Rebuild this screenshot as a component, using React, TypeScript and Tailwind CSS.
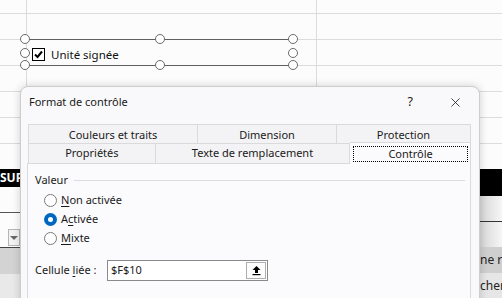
import { X } from 'lucide-react';

const font = { fontFamily: '"Noto Sans", "Open Sans", sans-serif' };

function GridRow({ h, line = true }: { h: string; line?: boolean }) {
  return (
    <div className={`flex ${h} ${line ? 'border-b border-[#dcdcdc]' : ''}`}>
      <div className="w-[27px] border-r border-[#dcdcdc]" />
      <div className="w-[290px] border-r border-[#dcdcdc]" />
      <div className="flex-1" />
    </div>
  );
}

function Handle() {
  return <div className="w-[10px] h-[10px] rounded-full border-[1.5px] border-[#6b6b6b] bg-white" />;
}

function Radio({ checked, label, under }: { checked?: boolean; label: string; under: number }) {
  return (
    <div className="flex items-center h-[19px]">
      {checked ? (
        <div className="w-[13px] h-[13px] rounded-full bg-[#0067c0] flex items-center justify-center">
          <div className="w-[5px] h-[5px] rounded-full bg-white" />
        </div>
      ) : (
        <div className="w-[13px] h-[13px] rounded-full border border-[#7a7a7a] bg-white" />
      )}
      <span className="ml-[4px] text-[#1a1a1a]">
        {label.slice(0, under)}
        <span className="underline underline-offset-2">{label[under]}</span>
        {label.slice(under + 1)}
      </span>
    </div>
  );
}

export default function App() {
  return (
    <div className="relative w-[502px] h-[298px] overflow-hidden bg-[#fbfcfb]" style={font}>
      {/* spreadsheet behind */}
      <div className="flex flex-col">
        <GridRow h="h-[14px]" />
        <GridRow h="h-[26px]" />
        <GridRow h="h-[26px]" />
        <GridRow h="h-[26px]" />
        <GridRow h="h-[26px]" />
        <GridRow h="h-[26px]" />
        <GridRow h="h-[25px]" line={false} />
        <div className="flex justify-between">
          <div className="w-[20px] flex flex-col overflow-hidden">
            <div className="h-[18px] bg-black text-white font-bold text-[12px] leading-[18px] whitespace-nowrap">SUP</div>
            <div className="h-[26px] border-b border-[#555]" />
            <div className="h-[35px] border-b border-[#444] flex items-end justify-end pb-[1px]">
              <div className="w-[12px] h-[17px] border border-[#b5b5b5] bg-[#f2f2f2] flex items-center justify-center">
                <div className="w-0 h-0 border-l-[4px] border-r-[4px] border-t-[4px] border-l-transparent border-r-transparent border-t-[#666]" />
              </div>
            </div>
            <div className="h-[26px] bg-[#d3d3d3]" />
            <div className="flex-1 h-[30px] bg-[#e9e9e9]" />
          </div>
          <div className="w-[22px] flex flex-col overflow-hidden text-[12px] text-[#222]">
            <div className="h-[27px] bg-black" />
            <div className="h-[26px] border-b border-[#333] bg-gradient-to-r from-[#d6d6d6] to-[#f6f6f6]" />
            <div className="h-[25px] bg-gradient-to-r from-[#d6d6d6] to-[#f6f6f6]" />
            <div className="h-[26px] bg-[#cfcfcf] leading-[26px] whitespace-nowrap">ne r</div>
            <div className="h-[26px] bg-[#e6e6e6] leading-[26px] whitespace-nowrap">cher</div>
          </div>
        </div>
      </div>

      {/* selected checkbox control */}
      <div className="absolute left-[20px] top-[34px] w-[278px] h-[36px]">
        <div className="absolute left-[5px] right-[5px] top-[5px] border-t border-[#5f5f5f]" />
        <div className="absolute left-[5px] right-[5px] top-[31px] border-t border-[#5f5f5f]" />
        <div className="absolute left-0 top-0"><Handle /></div>
        <div className="absolute left-[135px] top-0"><Handle /></div>
        <div className="absolute right-0 top-0"><Handle /></div>
        <div className="absolute left-0 top-[14px]"><Handle /></div>
        <div className="absolute right-0 top-[14px]"><Handle /></div>
        <div className="absolute left-0 top-[26px]"><Handle /></div>
        <div className="absolute left-[135px] top-[26px]"><Handle /></div>
        <div className="absolute right-0 top-[26px]"><Handle /></div>
        <div className="absolute left-[12px] top-[12px] flex items-center">
          <div className="w-[13px] h-[13px] border border-black bg-white flex items-center justify-center">
            <svg width="11" height="11" viewBox="0 0 11 11">
              <path d="M2 5.5 L4.5 8 L9 2.5" fill="none" stroke="black" strokeWidth="2" />
            </svg>
          </div>
          <span className="ml-[6px] text-[11.5px] text-[#111]">Unité signée</span>
        </div>
      </div>

      {/* dialog */}
      <div className="absolute left-[20px] top-[86px] w-[460px] h-[230px] rounded-t-[8px] border border-[#cdcdcd] bg-[#f9f9fb] shadow-[0_0_8px_rgba(0,0,0,0.18)] text-[11px]">
        <div className="h-[31px] flex items-center pl-[8px] pr-[16px] text-[#1a1a1a]">
          <span>Format de contrôle</span>
          <span className="ml-auto mr-[35px] text-[12.5px]">?</span>
          <X size={15} strokeWidth={1.3} className="text-[#1a1a1a]" />
        </div>

        <div className="mt-[6px] ml-[6px] mr-[8px] text-[#1a1a1a]">
          <div className="flex h-[19px] ml-[1px]">
            <div className="w-[170px] border-l border-t border-r border-[#dadada] bg-[#f3f3f5] flex items-center justify-center pt-[2px]">Couleurs et traits</div>
            <div className="w-[139px] border-t border-r border-[#dadada] bg-[#f3f3f5] flex items-center justify-center pt-[2px]">Dimension</div>
            <div className="w-[134px] border-t border-r border-[#dadada] bg-[#f3f3f5] flex items-center justify-center pt-[2px]">Protection</div>
          </div>
          <div className="flex h-[20px] ml-[1px]">
            <div className="w-[128px] border-l border-t border-r border-[#dadada] bg-[#f3f3f5] flex items-center justify-center">Propriétés</div>
            <div className="w-[195px] border-t border-r border-[#dadada] bg-[#f3f3f5] flex items-center justify-center">Texte de remplacement</div>
            <div className="relative z-10 -mt-[1px] h-[22px] w-[121px] border-t border-r border-[#dadada] bg-[#fbfbfd] pt-[3px] pl-[3px] pr-[2px]">
              <div className="h-[16px] border border-dotted border-black flex items-center justify-center">Contrôle</div>
            </div>
          </div>
          <div className="h-[140px] border border-[#dadada] bg-[#fbfbfd] pl-[7px] pr-[5px]">
            <div className="flex items-center h-[16px] mt-[8px]">
              <span>Valeur</span>
              <div className="flex-1 ml-[6px] border-t border-[#dcdcdc]" />
            </div>
            <div className="ml-[9px] mt-[3px] flex flex-col">
              <Radio label="Non activée" under={0} />
              <Radio label="Activée" under={1} checked />
              <Radio label="Mixte" under={0} />
            </div>
            <div className="flex items-center mt-[12px]">
              <span className="w-[72px]">
                Cellule <span className="underline underline-offset-2">l</span>iée :
              </span>
              <div className="w-[161px] h-[21px] border border-[#8a8a8a] bg-white flex items-center pl-[3px]">
                <span>$F$10</span>
                <div className="ml-auto mr-[1px] w-[20px] h-[17px] border border-[#adadad] bg-[#fdfdfd] flex items-center justify-center">
                  <svg width="11" height="11" viewBox="0 0 11 11">
                    <path d="M5.5 1 L1.5 5 H4 V8 H7 V5 H9.5 Z" fill="black" />
                    <rect x="1.5" y="9" width="8" height="1.2" fill="black" />
                  </svg>
                </div>
              </div>
            </div>
          </div>
        </div>
      </div>
    </div>
  );
}
